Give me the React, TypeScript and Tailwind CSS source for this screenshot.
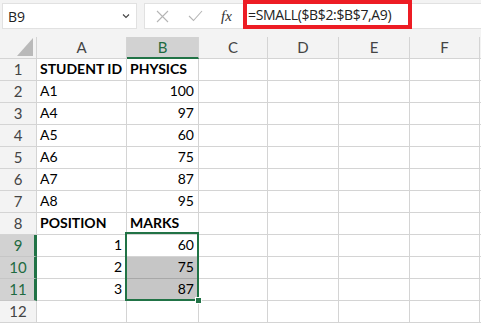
import React from "react";

const cols = [
  { name: "A", w: 90 },
  { name: "B", w: 72 },
  { name: "C", w: 69 },
  { name: "D", w: 71 },
  { name: "E", w: 71 },
  { name: "F", w: 70 },
  { name: "", w: 60 },
];

type Cell = { v: string; bold?: boolean; right?: boolean };
const data: Record<number, Record<string, Cell>> = {
  1: { A: { v: "STUDENT ID", bold: true }, B: { v: "PHYSICS", bold: true } },
  2: { A: { v: "A1" }, B: { v: "100", right: true } },
  3: { A: { v: "A4" }, B: { v: "97", right: true } },
  4: { A: { v: "A5" }, B: { v: "60", right: true } },
  5: { A: { v: "A6" }, B: { v: "75", right: true } },
  6: { A: { v: "A7" }, B: { v: "87", right: true } },
  7: { A: { v: "A8" }, B: { v: "95", right: true } },
  8: { A: { v: "POSITION", bold: true }, B: { v: "MARKS", bold: true } },
  9: { A: { v: "1", right: true }, B: { v: "60", right: true } },
  10: { A: { v: "2", right: true }, B: { v: "75", right: true } },
  11: { A: { v: "3", right: true }, B: { v: "87", right: true } },
};

const cellFont = { fontFamily: "Lato, 'Open Sans', sans-serif" };

export default function App() {
  const rows = Array.from({ length: 12 }, (_, i) => i + 1);
  return (
    <div className="w-[481px] h-[324px] overflow-hidden bg-white relative" style={cellFont}>
      {/* top bar */}
      <div className="h-[37px] bg-[#f3f3f3] flex items-start pt-[3px] pl-[2px]">
        <div className="w-[135px] h-[26px] bg-white border border-[#e1e1e1] flex items-center justify-between pl-[5px] pr-[6px]">
          <span className="text-[14px] text-[#222]" style={{ fontFamily: "'Open Sans', sans-serif" }}>B9</span>
          <svg width="8" height="6" viewBox="0 0 8 6"><path d="M1 1.5 L4 4.5 L7 1.5" fill="none" stroke="#444" strokeWidth="1.1" /></svg>
        </div>
        <div className="ml-[7px] flex-1 h-[26px] bg-white border border-[#e1e1e1] border-r-0 flex items-center">
          <div className="w-[98px] flex items-center pl-[11px]">
            <svg width="13" height="13" viewBox="0 0 13 13"><path d="M1 1 L12 12 M12 1 L1 12" stroke="#b5b5b5" strokeWidth="1.1" /></svg>
            <svg className="ml-[19px]" width="15" height="12" viewBox="0 0 15 12"><path d="M1 6 L5.5 10.5 L14 1" fill="none" stroke="#b5b5b5" strokeWidth="1.1" /></svg>
            <span className="ml-[18px] italic text-[15px] text-[#333]" style={{ fontFamily: "'Liberation Serif', serif" }}>fx</span>
          </div>
        </div>
      </div>
      {/* red highlighted formula */}
      <div className="absolute left-[243px] top-0 w-[169px] h-[29px] border-[4px] border-[#ed1c24] bg-white flex items-center pl-[1px]">
        <span className="text-[14px] tracking-[-0.35px] text-[#222] whitespace-nowrap" style={{ fontFamily: "'Open Sans', sans-serif" }}>=SMALL($B$2:$B$7,A9)</span>
      </div>

      {/* grid */}
      <div className="relative">
        {/* header row */}
        <div className="flex h-[22px] bg-[#f3f3f3]">
          <div className="w-[37px] shrink-0 border-r border-b border-[#d4d4d4] relative">
            <svg className="absolute right-[3px] bottom-[2px]" width="16" height="18" viewBox="0 0 16 18"><polygon points="16,0 16,18 0,18" fill="#b9b9b9" /></svg>
          </div>
          {cols.map((c, i) => (
            <div
              key={i}
              style={{ width: c.w }}
              className={
                c.name === "B"
                  ? "shrink-0 bg-[#d2d2d2] border-r border-[#d4d4d4] border-b-2 border-b-[#217346] flex items-center justify-center text-[15px] text-[#1e6b41]"
                  : "shrink-0 border-r border-b border-[#d4d4d4] flex items-center justify-center text-[15px] text-[#444]"
              }
            >
              {c.name}
            </div>
          ))}
        </div>
        {rows.map((r) => {
          const sel = r >= 9 && r <= 11;
          return (
            <div key={r} className="flex h-[22px]">
              <div
                className={
                  sel
                    ? "w-[37px] shrink-0 bg-[#d2d2d2] border-b border-[#c6c6c6] border-r-[3px] border-r-[#217346] flex items-center justify-center text-[15px] text-[#1e6b41] pl-[2px]"
                    : "w-[37px] shrink-0 bg-[#f3f3f3] border-r border-b border-[#d4d4d4] flex items-center justify-center text-[15px] text-[#444]"
                }
              >
                {r}
              </div>
              {cols.map((c, i) => {
                const cell = data[r]?.[c.name];
                const gray = c.name === "B" && (r === 10 || r === 11);
                return (
                  <div
                    key={i}
                    style={{ width: c.w }}
                    className={
                      (gray ? "bg-[#c6c6c6] border-b border-[#a8a8a8] " : "border-b border-[#d4d4d4] ") +
                      "shrink-0 border-r border-r-[#d4d4d4] flex items-end pb-[1px] px-[3px] text-[14px] text-black leading-[20px] whitespace-nowrap " +
                      (cell?.right ? "justify-end pr-[4px] " : "justify-start ") +
                      (cell?.bold ? "font-bold" : "")
                    }
                  >
                    {cell?.v ?? ""}
                  </div>
                );
              })}
            </div>
          );
        })}
        {/* selection overlay */}
        <div className="absolute left-[125px] top-[195px] w-[74px] h-[69px] border-2 border-[#217346] pointer-events-none" />
        <div className="absolute left-[195px] top-[260px] w-[7px] h-[7px] bg-[#217346] border border-white" />
      </div>
    </div>
  );
}
